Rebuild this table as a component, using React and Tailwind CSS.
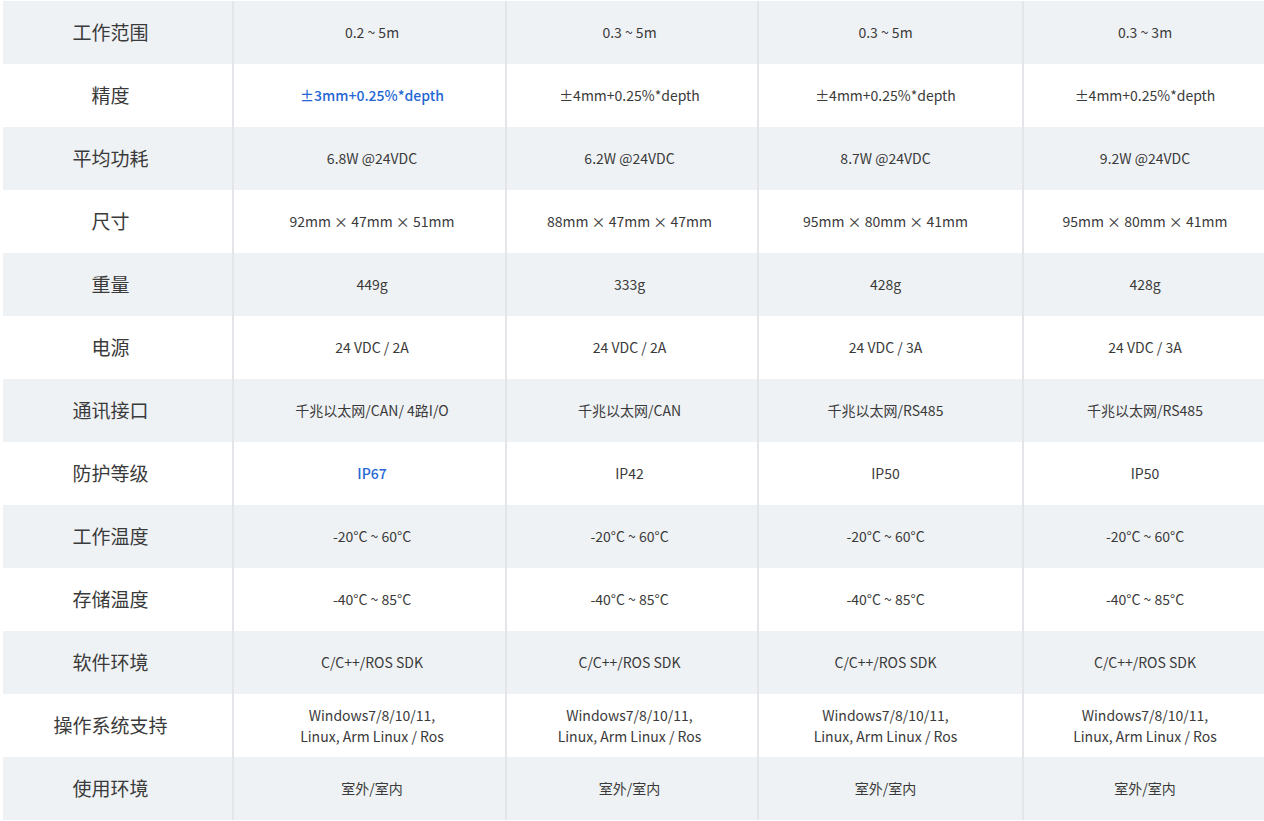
const rows = [
  { label: "工作范围", values: ["0.2 ~ 5m", "0.3 ~ 5m", "0.3 ~ 5m", "0.3 ~ 3m"] },
  {
    label: "精度",
    values: ["±3mm+0.25%*depth", "±4mm+0.25%*depth", "±4mm+0.25%*depth", "±4mm+0.25%*depth"],
    highlight: true,
  },
  { label: "平均功耗", values: ["6.8W @24VDC", "6.2W @24VDC", "8.7W @24VDC", "9.2W @24VDC"] },
  {
    label: "尺寸",
    values: ["92mm × 47mm × 51mm", "88mm × 47mm × 47mm", "95mm × 80mm × 41mm", "95mm × 80mm × 41mm"],
  },
  { label: "重量", values: ["449g", "333g", "428g", "428g"] },
  { label: "电源", values: ["24 VDC / 2A", "24 VDC / 2A", "24 VDC / 3A", "24 VDC / 3A"] },
  {
    label: "通讯接口",
    values: ["千兆以太网/CAN/ 4路I/O", "千兆以太网/CAN", "千兆以太网/RS485", "千兆以太网/RS485"],
  },
  { label: "防护等级", values: ["IP67", "IP42", "IP50", "IP50"], highlight: true },
  { label: "工作温度", values: ["-20°C ~ 60°C", "-20°C ~ 60°C", "-20°C ~ 60°C", "-20°C ~ 60°C"] },
  { label: "存储温度", values: ["-40°C ~ 85°C", "-40°C ~ 85°C", "-40°C ~ 85°C", "-40°C ~ 85°C"] },
  {
    label: "软件环境",
    values: ["C/C++/ROS SDK", "C/C++/ROS SDK", "C/C++/ROS SDK", "C/C++/ROS SDK"],
  },
  {
    label: "操作系统支持",
    values: [
      ["Windows7/8/10/11,", "Linux, Arm Linux / Ros"],
      ["Windows7/8/10/11,", "Linux, Arm Linux / Ros"],
      ["Windows7/8/10/11,", "Linux, Arm Linux / Ros"],
      ["Windows7/8/10/11,", "Linux, Arm Linux / Ros"],
    ],
  },
  { label: "使用环境", values: ["室外/室内", "室外/室内", "室外/室内", "室外/室内"] },
];

// small per-column nudges so the text sits where the original table put it
const colPad = ["pl-[5px]", "pr-[5px]", "pr-[10px]", "pl-[4px]"];

function SpecRow({ row, index }) {
  const shaded = index % 2 === 0;
  return (
    <div
      className={`grid grid-cols-[229px_273px_252px_265px_240px] h-[63px] ${
        shaded ? "bg-[#eff2f5]" : "bg-white"
      }`}
    >
      <div className="flex items-center justify-center pr-[14px] text-[19px] text-[#3a3a3a]">
        {row.label}
      </div>
      {row.values.map((v, i) => (
        <div
          key={i}
          className={`flex flex-col items-center justify-center border-l-2 border-[#e3e5e8] text-[14px] leading-[21px] text-center ${colPad[i]} ${
            row.highlight && i === 0 ? "text-[#2467d4] font-medium" : "text-[#3a3a3a]"
          }`}
        >
          {Array.isArray(v) ? v.map((line, j) => <span key={j}>{line}</span>) : v}
        </div>
      ))}
    </div>
  );
}

export default function App() {
  return (
    <div
      className="w-[1264px] h-[821px] bg-white pl-[3px] pt-[1px] overflow-hidden"
      style={{ fontFamily: '"Noto Sans CJK SC", "Noto Sans", sans-serif' }}
    >
      {rows.map((row, i) => (
        <SpecRow key={row.label} row={row} index={i} />
      ))}
    </div>
  );
}
